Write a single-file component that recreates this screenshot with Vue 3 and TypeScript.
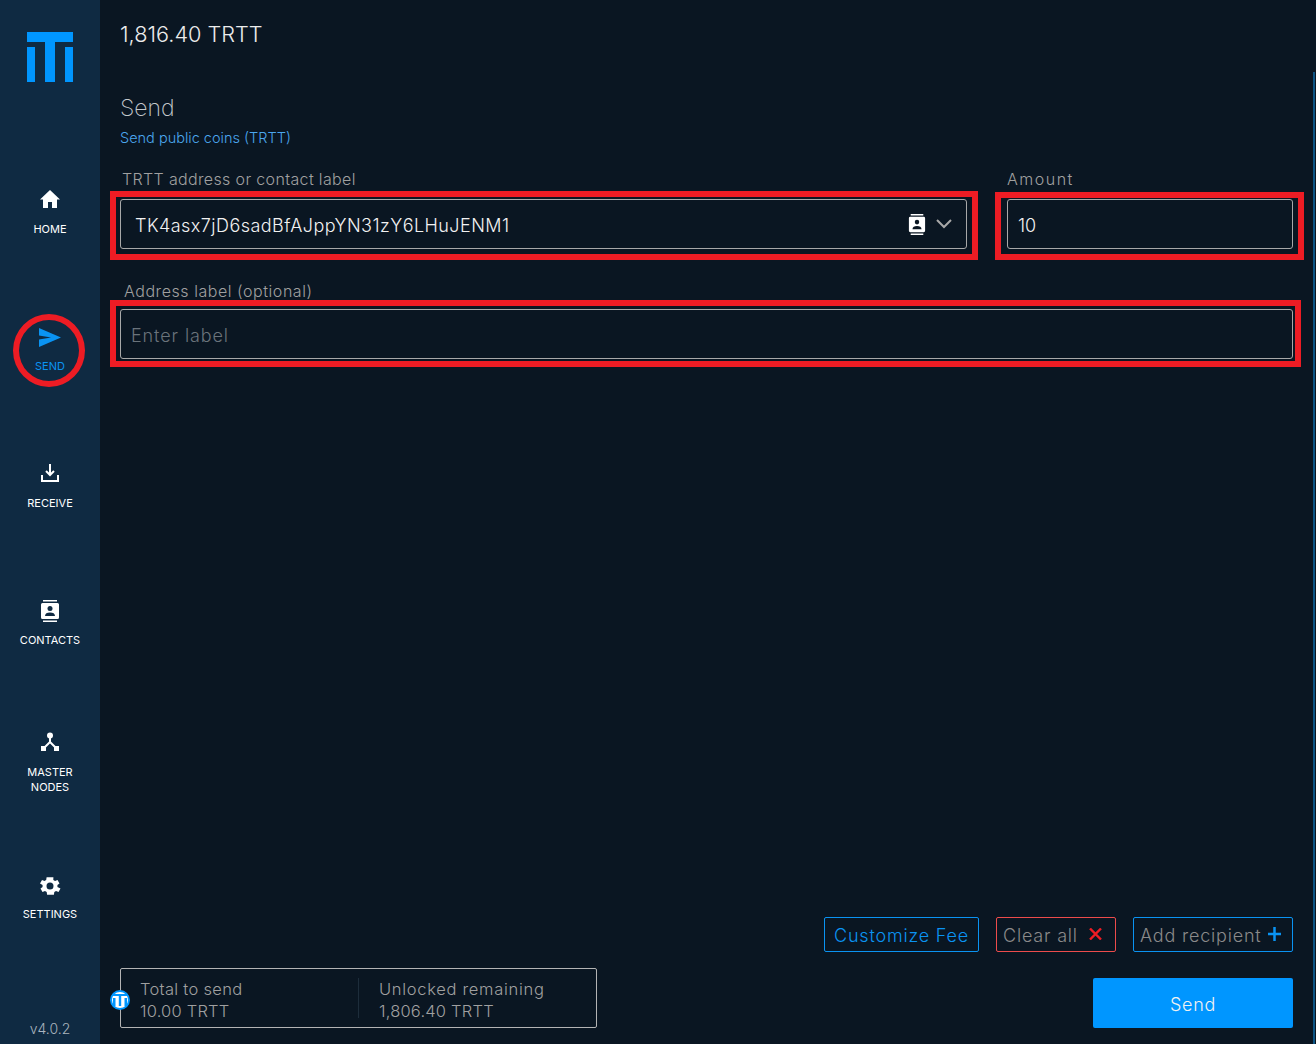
<script setup lang="ts">
interface NavItem {
  key: string;
  lines: string[];
  active?: boolean;
}

const navItems: NavItem[] = [
  { key: 'home', lines: ['HOME'] },
  { key: 'send', lines: ['SEND'], active: true },
  { key: 'receive', lines: ['RECEIVE'] },
  { key: 'contacts', lines: ['CONTACTS'] },
  { key: 'nodes', lines: ['MASTER', 'NODES'] },
  { key: 'settings', lines: ['SETTINGS'] },
];
</script>

<template>
  <div class="app">
    <aside class="sidebar">
      <svg class="logo" width="46" height="50" viewBox="0 0 46 50" fill="#0096ff">
        <path d="M0 0h46v10H0zM0 15h8v35H0zM18 10h10v40H18zM38 15h8v35h-8z" />
      </svg>
      <nav class="nav">
        <a v-for="item in navItems" :key="item.key" class="nav-item" :class="[item.key, { active: item.active }]">
          <svg v-if="item.key === 'home'" width="22" height="20" viewBox="0 0 22 20" fill="#fff">
            <path d="M11 1 1 10.500h3V19h5v-6h4v6h5v-8.500h3z" />
          </svg>
          <svg v-else-if="item.key === 'send'" width="24" height="20" viewBox="0 0 24 20" fill="#0a93f2">
            <path d="M1 0 23 9.500 1 19l0-7.500L13 9.500 1 7.500z" />
          </svg>
          <svg v-else-if="item.key === 'receive'" width="20" height="20" viewBox="0 0 20 20" fill="none" stroke="#fff" stroke-width="2">
            <path d="M10 1v11M6 8l4 4 4-4M2 12v6h16v-6" />
          </svg>
          <svg v-else-if="item.key === 'contacts'" width="20" height="22" viewBox="0 0 20 22" fill="#fff">
            <path d="M3 0h14v1.500H3zM3 20.500h14V22H3zM2.500 3h15A1.500 1.500 0 0 1 19 4.500v13a1.500 1.500 0 0 1-1.500 1.500h-15A1.500 1.500 0 0 1 1 17.500v-13A1.500 1.500 0 0 1 2.500 3z" />
            <circle cx="10" cy="8.500" r="2.500" fill="#0f2a42" />
            <path d="M5 16c0-2.500 2-3.500 5-3.500s5 1 5 3.500z" fill="#0f2a42" />
          </svg>
          <svg v-else-if="item.key === 'nodes'" width="20" height="20" viewBox="0 0 20 20" fill="#fff">
            <circle cx="10" cy="3.500" r="3" />
            <rect x="1" y="14" width="5" height="5" />
            <rect x="14" y="14" width="5" height="5" />
            <path d="M10 5v6M10 10l-6 6M10 10l6 6" stroke="#fff" stroke-width="2" fill="none" />
          </svg>
          <svg v-else width="24" height="24" viewBox="0 0 24 24" fill="#fff">
            <path fill-rule="evenodd" d="M19.400 13a7.500 7.500 0 0 0 0-2l2.100-1.600-2-3.500-2.500 1a7.500 7.500 0 0 0-1.700-1L15.400 3.200h-6.800l-.4 2.700a7.500 7.500 0 0 0-1.700 1l-2.500-1-2 3.500L4.600 11a7.500 7.500 0 0 0 0 2l-2.100 1.600 2 3.500 2.500-1a7.500 7.500 0 0 0 1.700 1l.4 2.700h6.800l.4-2.700a7.500 7.500 0 0 0 1.700-1l2.500 1 2-3.500zM12 15.500a3.500 3.500 0 1 1 0-7 3.500 3.500 0 0 1 0 7z" />
          </svg>
          <span class="nav-label">
            <span v-for="line in item.lines" :key="line">{{ line }}</span>
          </span>
        </a>
      </nav>
      <div class="version">v4.0.2</div>
    </aside>

    <main class="main">
      <div class="balance">1,816.40 TRTT</div>
      <h1 class="title">Send</h1>
      <p class="subtitle">Send public coins (TRTT)</p>

      <div class="row">
        <div class="field grow">
          <label class="label">TRTT address or contact label</label>
          <div class="input address">
            <span class="address-text">TK4asx7jD6sadBfAJppYN31zY6LHuJENM1</span>
            <svg class="book" width="18" height="21" viewBox="0 0 20 22" preserveAspectRatio="none" fill="#fff">
              <path d="M3 0h14v1.500H3zM3 20.500h14V22H3zM2.500 3h15A1.500 1.500 0 0 1 19 4.500v13a1.500 1.500 0 0 1-1.500 1.500h-15A1.500 1.500 0 0 1 1 17.500v-13A1.500 1.500 0 0 1 2.500 3z" />
              <circle cx="10" cy="8.500" r="2.500" fill="#0a1622" />
              <path d="M5 16c0-2.500 2-3.500 5-3.500s5 1 5 3.500z" fill="#0a1622" />
            </svg>
            <svg width="16" height="10" viewBox="0 0 16 10" fill="none" stroke="#a8a8a8" stroke-width="2">
              <path d="M1 1l7 7 7-7" />
            </svg>
          </div>
        </div>
        <div class="field amount">
          <label class="label">Amount</label>
          <div class="input"><span class="value">10</span></div>
        </div>
      </div>

      <div class="field label-field">
        <label class="label indent">Address label (optional)</label>
        <div class="input"><span class="placeholder">Enter label</span></div>
      </div>

      <div class="spacer"></div>

      <div class="actions">
        <button class="btn blue">Customize Fee</button>
        <button class="btn red">
          Clear all
          <svg width="13" height="12" viewBox="0 0 13 12" stroke="#ed1c24" stroke-width="2.400" fill="none">
            <path d="M1 0.500l11 11M12 0.500l-11 11" />
          </svg>
        </button>
        <button class="btn outline">
          Add recipient
          <svg width="13" height="14" viewBox="0 0 13 14" stroke="#0a93f2" stroke-width="2.500" fill="none">
            <path d="M6.500 0v14M0 7h13" />
          </svg>
        </button>
      </div>

      <div class="footer">
        <div class="summary">
          <span class="coin">
            <svg width="14" height="12" viewBox="0 0 14 12" fill="#0096ff">
              <path d="M0 0h14v2H0zM0 4h2.500v8H0zM5.800 2h2.400v10H5.800zM11.500 4H14v8h-2.500z" />
            </svg>
          </span>
          <div class="summary-col first">
            <span>Total to send</span>
            <span>10.00 TRTT</span>
          </div>
          <div class="summary-col second">
            <span>Unlocked remaining</span>
            <span>1,806.40 TRTT</span>
          </div>
        </div>
        <button class="send-btn">Send</button>
      </div>
    </main>

    <div class="scroll-thumb"></div>

    <!-- red annotation marks painted over the screenshot -->
    <div class="mark mark-address"></div>
    <div class="mark mark-amount"></div>
    <div class="mark mark-label"></div>
    <div class="mark mark-nav"></div>
  </div>
</template>

<style scoped>
.app {
  position: relative;
  display: flex;
  width: 1316px;
  height: 1044px;
  overflow: hidden;
  background: #0a1622;
  color: #fff;
  font-family: Inter, "Noto Sans", sans-serif;
  font-weight: 300;
}

.sidebar {
  display: flex;
  flex-direction: column;
  align-items: center;
  width: 100px;
  flex-shrink: 0;
  background: #0f2a42;
}

.logo {
  margin-top: 32px;
  margin-bottom: 107px;
}

.nav {
  display: flex;
  flex-direction: column;
  align-items: center;
  width: 100%;
}

.nav-item {
  display: flex;
  flex-direction: column;
  align-items: center;
  gap: 13px;
  font-size: 11px;
  font-weight: 400;
  color: #fff;
}

.nav-item.home { height: 137px; }
.nav-item.send { height: 135px; padding-top: 2px; gap: 11px; color: #0a93f2; }
.nav-item.receive { height: 137px; }
.nav-item.contacts { height: 132px; gap: 11px; }
.nav-item.nodes { height: 142px; gap: 13px; }
.nav-item.settings { gap: 9px; }

.nav-label {
  display: flex;
  flex-direction: column;
  align-items: center;
  line-height: 15px;
}

.version {
  margin-top: auto;
  margin-bottom: 7px;
  font-size: 14px;
  color: #a9b4be;
}

.main {
  display: flex;
  flex-direction: column;
  flex: 1;
  padding: 0 23px 16px 20px;
  min-width: 0;
}

.balance {
  margin-top: 20px;
  font-size: 21.700px;
  line-height: 28px;
  color: #ececec;
}

.title {
  margin: 45px 0 0;
  font-size: 23px;
  font-weight: 200;
  line-height: 30px;
  color: #c4c8cc;
}

.subtitle {
  margin: 5px 0 0;
  font-size: 14.500px;
  line-height: 20px;
  color: #4ba6ee;
}

.row {
  display: flex;
  gap: 40px;
  margin-top: 20px;
}

.field {
  display: flex;
  flex-direction: column;
}

.grow { flex: 1; }
.amount { width: 286px; }

.label {
  margin-left: 2px;
  font-size: 16px;
  line-height: 22px;
  letter-spacing: 0.35px;
  color: #a0a0a0;
}

.amount .label { margin-left: 0; letter-spacing: 1.500px; }

.label.indent { margin-left: 4px; letter-spacing: 0.55px; }

.label-field { margin-top: 31px; }

.input {
  display: flex;
  align-items: center;
  height: 50px;
  box-sizing: border-box;
  border: 1px solid #a8a8a8;
  border-radius: 3px;
  padding: 0 10px;
  margin-top: 9px;
  font-size: 18px;
}

.label-field .input { margin-top: 7px; }

.address { padding: 0 14px; }

.address-text {
  flex: 1;
  letter-spacing: 0.45px;
  color: #f2f2f2;
  padding-top: 2px;
}

.book { margin-right: 10px; }

.value { color: #f2f2f2; padding-top: 2px; }

.placeholder {
  letter-spacing: 0.9px;
  color: #6a737b;
  padding-top: 2px;
}

.spacer { flex: 1; }

.actions {
  display: flex;
  justify-content: flex-end;
  gap: 17px;
}

.btn {
  display: flex;
  align-items: center;
  height: 35px;
  padding: 2px 6px 0;
  background: transparent;
  border: 1px solid #0a93f2;
  border-radius: 2px;
  font: inherit;
  font-size: 18px;
  letter-spacing: 0.8px;
  color: #8a8a8a;
}

.btn.blue { width: 155px; justify-content: center; padding: 2px 0 0; color: #0a93f2; }
.btn.red { width: 120px; gap: 11px; border-color: #ed4c4c; }
.btn.red svg { margin-top: -3px; }
.btn.outline { width: 160px; gap: 7px; }
.btn.outline svg { margin-top: -3px; }

.footer {
  display: flex;
  justify-content: space-between;
  align-items: flex-end;
  margin-top: 16px;
}

.summary {
  position: relative;
  display: flex;
  align-items: center;
  width: 477px;
  height: 60px;
  box-sizing: border-box;
  border: 1px solid #b4b4b4;
  border-radius: 2px;
}

.coin {
  position: absolute;
  left: -11px;
  top: 21px;
  display: flex;
  align-items: center;
  justify-content: center;
  width: 20px;
  height: 20px;
  box-sizing: border-box;
  border: 2px solid #0096ff;
  border-radius: 50%;
  background: #fff;
}

.summary-col {
  display: flex;
  flex-direction: column;
  padding: 3px 0 0 20px;
  font-size: 16.500px;
  line-height: 22px;
  letter-spacing: 0.2px;
  color: #a0a0a0;
}

.summary-col.first {
  width: 238px;
  box-sizing: border-box;
  height: 40px;
  justify-content: center;
  border-right: 1px solid #1d2d3b;
  padding-left: 19px;
}

.first span:first-child { letter-spacing: 0.3px; }
.second span:first-child { letter-spacing: 0.7px; }

.send-btn {
  width: 200px;
  height: 50px;
  padding-top: 4px;
  background: #0096ff;
  border: none;
  border-radius: 2px;
  font: inherit;
  font-size: 18px;
  letter-spacing: 0.7px;
  color: #f2f2f2;
}

.scroll-thumb {
  position: absolute;
  left: 1313px;
  top: 72px;
  bottom: 0;
  width: 2px;
  background: #0d5484;
}

.mark {
  position: absolute;
  box-sizing: border-box;
  border: 6px solid #ed1c24;
}

.mark-address { left: 110px; top: 191px; width: 868px; height: 69px; }
.mark-amount { left: 995px; top: 192px; width: 309px; height: 68px; }
.mark-label { left: 110px; top: 300px; width: 1191px; height: 67px; }

.mark-nav {
  left: 13px;
  top: 314px;
  width: 72px;
  height: 73px;
  border-radius: 50%;
}
</style>

<style>
body {
  background: #0a1622;
}
</style>
